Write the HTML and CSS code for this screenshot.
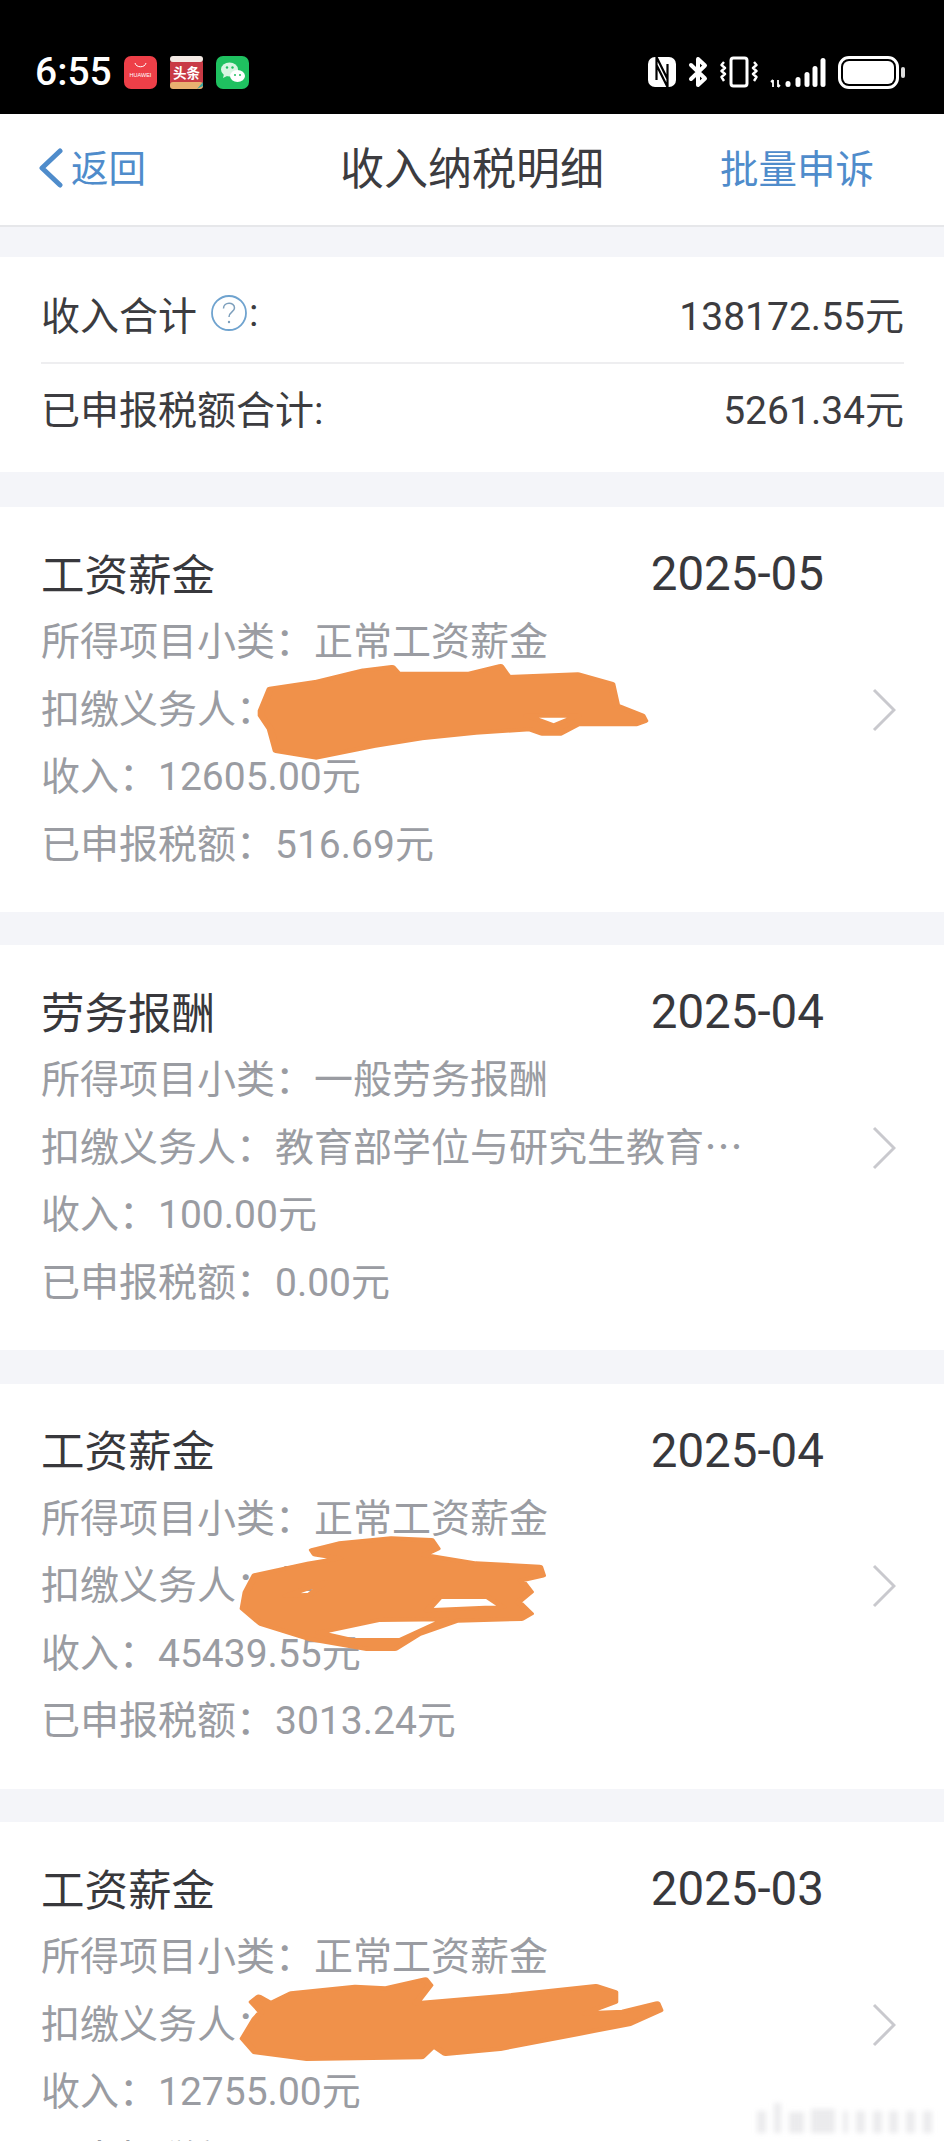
FILE: index.html
```html
<!DOCTYPE html>
<html lang="zh-CN">
<head>
<meta charset="utf-8">
<title>收入纳税明细</title>
<link rel="stylesheet" href="styles.css">
</head>
<body>
<div class="screen">
  <header class="status">
    <div class="status-left">
      <span class="time">6:55</span>
      <svg class="app" viewBox="0 0 33 33"><rect width="33" height="33" rx="7" fill="#ee3f48"/><path d="M11 7c1 5 10 5 11 0" fill="none" stroke="#fff" stroke-width="1"/><text x="16.500" y="21" class="app-huawei">HUAWEI</text></svg>
      <svg class="app" viewBox="0 0 33 33"><rect width="33" height="33" rx="7" fill="#c93a45"/><rect width="33" height="6" rx="3" fill="#f3e9e4"/><rect y="26" width="33" height="7" rx="3" fill="#e8b070"/><path d="M27 33l6-7v4z" fill="#3aa5a0"/><text x="16.500" y="22" class="app-toutiao">头条</text></svg>
      <svg class="app" viewBox="0 0 33 33"><rect width="33" height="33" rx="7" fill="#1fc160"/><ellipse cx="13.500" cy="13.500" rx="8.500" ry="7" fill="#d8f5e2"/><ellipse cx="21.500" cy="20" rx="7.500" ry="6" fill="#fff"/><path d="M8 18l-1 4 4-2z" fill="#d8f5e2"/><circle cx="11" cy="11.500" r="1.200" fill="#1fc160"/><circle cx="16.500" cy="11.500" r="1.200" fill="#1fc160"/><circle cx="19" cy="19" r="1" fill="#1fc160"/><circle cx="24" cy="19" r="1" fill="#1fc160"/></svg>
    </div>
    <div class="status-right">
      <svg class="ic-nfc" viewBox="0 0 28 32"><rect y="1" width="28" height="30" rx="7" fill="#fff"/><path d="M8.500 1v23M19.500 31V8M8.500 9l11 22M8.500 1l11 22" fill="none" stroke="#000" stroke-width="2.200"/></svg>
      <svg class="ic-bt" viewBox="0 0 20 32"><path d="M10 3l7 6.500L3 23M10 29l7-6.500L3 9M10 3v26" fill="none" stroke="#fff" stroke-width="4" stroke-linejoin="round" stroke-linecap="round"/></svg>
      <svg class="ic-vib" viewBox="0 0 38 32"><rect x="11" y="2" width="16" height="28" rx="2.500" fill="none" stroke="#fff" stroke-width="3"/><path d="M4 6l-2.500 3L5 12l-3.500 3L5 18l-3.500 3L4 25M34 6l2.500 3L33 12l3.500 3L33 18l3.500 3L34 25" fill="none" stroke="#fff" stroke-width="2.400" stroke-linejoin="round"/></svg>
      <svg class="ic-sig" viewBox="0 0 56 32"><path d="M3 24v7M1 26l2-2M8 24v7M10 29l-2 2" fill="none" stroke="#fff" stroke-width="1.800"/><rect x="15.500" y="25" width="5" height="6" rx="2.500" fill="#fff"/><rect x="25.500" y="21" width="5" height="10" rx="2.500" fill="#fff"/><rect x="34.500" y="16" width="5" height="15" rx="2.500" fill="#fff"/><rect x="42.500" y="10" width="5" height="21" rx="2.500" fill="#fff"/><rect x="50.500" y="2" width="5" height="29" rx="2.500" fill="#fff"/></svg>
      <div class="battery"><div class="battery-fill"></div></div>
    </div>
  </header>

  <nav class="nav">
    <a class="nav-back">
      <svg class="back-chev" viewBox="0 0 24 40"><path d="M21 3L3 20l18 17" fill="none" stroke="#4f8ccb" stroke-width="5" stroke-linecap="round" stroke-linejoin="round"/></svg>
      <span>返回</span>
    </a>
    <h1 class="nav-title">收入纳税明细</h1>
    <a class="nav-action">批量申诉</a>
  </nav>

  <section class="summary">
    <div class="sum-row sum-first">
      <div class="sum-label">收入合计<svg class="help" viewBox="0 0 36 36"><circle cx="18" cy="18" r="17" fill="none" stroke="#6fa3cf" stroke-width="1.800"/><path d="M12.500 13.500c0-7 11-7 11-.5 0 4-5.500 4-5.500 9" fill="none" stroke="#7d9fbc" stroke-width="1.500"/><circle cx="18" cy="27" r="1.200" fill="#7d9fbc"/></svg>:</div>
      <div class="sum-value">138172.55元</div>
    </div>
    <div class="sum-row sum-second">
      <div class="sum-label">已申报税额合计:</div>
      <div class="sum-value">5261.34元</div>
    </div>
  </section>

  <article class="card">
    <div class="card-body">
      <div class="card-head"><span class="card-title">工资薪金</span><span class="card-date">2025-05</span></div>
      <div class="line">所得项目小类：正常工资薪金</div>
      <div class="line">扣缴义务人：某某单位</div>
      <div class="line">收入：12605.00元</div>
      <div class="line">已申报税额：516.69元</div>
    </div>
    <svg class="chev" viewBox="0 0 24 44"><path d="M2 2l20 20L2 42" fill="none" stroke="#c9c9ce" stroke-width="3"/></svg>
    <svg class="scribble s1" viewBox="0 0 1568 1320" preserveAspectRatio="none"><path fill-rule="evenodd" d="M434 635L449 569 524 549 604 514 651 504 661 524 710 524 780 524 831 501 844 534 960 526 1016 554 1024 619 1066 649 1071 666 1056 676 960 676 930 704 900 704 880 691 790 701 700 718 620 741 525 776 459 756 449 690 434 650ZM875 650L960 650 920 680Z"/></svg>
  </article>

  <article class="card">
    <div class="card-body">
      <div class="card-head"><span class="card-title">劳务报酬</span><span class="card-date">2025-04</span></div>
      <div class="line">所得项目小类：一般劳务报酬</div>
      <div class="line">扣缴义务人：教育部学位与研究生教育<span class="cjk">…</span></div>
      <div class="line">收入：100.00元</div>
      <div class="line">已申报税额：0.00元</div>
    </div>
    <svg class="chev" viewBox="0 0 24 44"><path d="M2 2l20 20L2 42" fill="none" stroke="#c9c9ce" stroke-width="3"/></svg>
  </article>

  <article class="card">
    <div class="card-body">
      <div class="card-head"><span class="card-title">工资薪金</span><span class="card-date">2025-04</span></div>
      <div class="line">所得项目小类：正常工资薪金</div>
      <div class="line">扣缴义务人：某某单位</div>
      <div class="line">收入：45439.55元</div>
      <div class="line">已申报税额：3013.24元</div>
    </div>
    <svg class="chev" viewBox="0 0 24 44"><path d="M2 2l20 20L2 42" fill="none" stroke="#c9c9ce" stroke-width="3"/></svg>
    <svg class="scribble s3" viewBox="0 0 1568 1200" preserveAspectRatio="none"><path fill-rule="evenodd" d="M519 444L564 424 650 409 716 414 726 440 704 459 790 484 896 494 901 521 866 535 881 570 861 600 881 635 866 651 760 656 696 696 656 741 610 741 514 711 434 666 404 620 409 570 424 519 514 484 564 469 524 458ZM730 585L810 585 835 615 710 625ZM530 692L630 654 740 652 665 714 585 714ZM475 582L540 540 515 578Z"/></svg>
  </article>

  <article class="card">
    <div class="card-body">
      <div class="card-head"><span class="card-title">工资薪金</span><span class="card-date">2025-03</span></div>
      <div class="line">所得项目小类：正常工资薪金</div>
      <div class="line">扣缴义务人：某某单位</div>
      <div class="line">收入：12755.00元</div>
      <div class="line">已申报税额：</div>
    </div>
    <svg class="chev" viewBox="0 0 24 44"><path d="M2 2l20 20L2 42" fill="none" stroke="#c9c9ce" stroke-width="3"/></svg>
    <svg class="scribble s4" viewBox="0 0 1568 1023" preserveAspectRatio="none"><path d="M419 600L430 584 450 604 484 574 590 554 640 559 706 532 714 550 691 604 850 579 990 552 1021 570 1021 600 971 634 1035 629 1091 604 1096 625 1046 666 960 696 830 741 740 756 720 731 700 766 510 771 424 751 404 710 424 650 434 630Z"/></svg>
  </article>

  <div class="watermark" aria-hidden="true"><i></i><i></i><i></i><i></i><i></i><i></i><i></i><i></i><i></i><i></i></div>
</div>
</body>
</html>
```
FILE: styles.css
```css
* { box-sizing: border-box; }
html, body { margin: 0; padding: 0; }
body {
  font-family: Roboto, "Noto Sans CJK SC", sans-serif;
  color: #3c3c40;
  background: #f4f5f9;
}
.screen {
  position: relative;
  width: 944px;
  height: 2141px;
  overflow: hidden;
  background: #f4f5f9;
}
.status {
  height: 114px;
  background: #000;
  display: flex;
  justify-content: space-between;
  align-items: flex-start;
  padding: 55px 39px 0 35px;
  color: #fff;
}
.status-left { display: flex; align-items: center; gap: 13px; height: 34px; }
.time { font-size: 39px; font-weight: 500; line-height: 34px; margin-right: -1px; }
.app { width: 33px; height: 33px; display: block; }
.app-huawei { font-family: "Liberation Sans", sans-serif; font-size: 5.500px; fill: #fff; text-anchor: middle; }
.app-toutiao { font-family: "Noto Sans CJK SC", sans-serif; font-size: 13.500px; font-weight: 700; fill: #fff; text-anchor: middle; }
.status-right { display: flex; align-items: center; gap: 12px; height: 34px; }
.ic-nfc { width: 28px; height: 32px; }
.ic-bt { width: 20px; height: 32px; }
.ic-vib { width: 38px; height: 32px; }
.ic-sig { width: 56px; height: 32px; }
.battery {
  position: relative;
  width: 61px;
  height: 33px;
  margin-right: 6px;
  border: 3px solid #fff;
  border-radius: 11px;
  padding: 2px;
}
.battery::after {
  content: "";
  position: absolute;
  right: -9px;
  top: 8px;
  width: 4px;
  height: 11px;
  border-radius: 2px;
  background: #ddd;
}
.battery-fill { width: 100%; height: 100%; background: #fff; border-radius: 6px; }

.nav {
  height: 113px;
  background: #fff;
  border-bottom: 2px solid #e6e7ea;
  display: grid;
  grid-template-columns: 301px auto 1fr;
  align-items: center;
  padding: 0 70px 8px 39px;
  margin-bottom: 30px;
}
.nav-back { display: flex; align-items: center; gap: 8px; color: #4f8ccb; font-size: 37.500px; }
.back-chev { width: 24px; height: 40px; margin-top: 4px; }
.nav-title { margin: 0; font-size: 44px; font-weight: 400; color: #3c3c40; }
.nav-action { justify-self: end; color: #4f8ccb; font-size: 38.500px; }

.summary {
  background: #fff;
  padding: 0 40px 0 41px;
  margin-bottom: 35px;
}
.sum-row {
  display: flex;
  justify-content: space-between;
  align-items: center;
  font-size: 39px;
}
.sum-first { height: 107px; padding-top: 6px; border-bottom: 2px solid #eeeef0; }
.sum-second { height: 108px; padding-bottom: 23px; }
.sum-label { display: flex; align-items: center; }
.help { width: 36px; height: 36px; margin: 0 2px 0 14px; }

.card {
  position: relative;
  height: 405px;
  margin-bottom: 33.400px;
  background: #fff;
  padding: 0 48px 0 41px;
  display: flex;
  justify-content: space-between;
  align-items: center;
}
.card-body { align-self: flex-start; width: 783px; padding-top: 32px; }
.card-head { display: flex; justify-content: space-between; align-items: center; height: 70px; color: #38383c; }
.card-title { font-size: 43.500px; margin-bottom: 4px; }
.card-date { font-size: 47.500px; }
.line {
  font-size: 39px;
  color: #9a9ca2;
  height: 67.500px;
  line-height: 67.500px;
  white-space: nowrap;
}
.cjk { font-family: "Noto Sans CJK SC", sans-serif; line-height: 0; }
.chev { width: 24px; height: 44px; flex: none; }
.scribble {
  position: absolute;
  left: 0;
  width: 944px;
  fill: #f0914a;
  stroke: #f0914a;
  stroke-width: 12;
  stroke-linejoin: round;
}
.s1 { top: -8px; height: 440px; }
.s3 { top: 18px; height: 400px; }
.s4 { top: -20px; height: 341px; }

.watermark {
  position: absolute;
  left: 757px;
  top: 2103px;
  width: 175px;
  height: 30px;
  display: flex;
  justify-content: space-between;
  align-items: flex-end;
  filter: blur(2.500px);
}
.watermark i { width: 9px; height: 75%; background: rgba(190, 190, 195, .3); }
.watermark i:nth-child(2) { height: 100%; width: 7px; }
.watermark i:nth-child(3) { width: 15px; height: 70%; }
.watermark i:nth-child(4) { width: 24px; height: 80%; }
.watermark i:nth-child(5) { width: 5px; }
```
